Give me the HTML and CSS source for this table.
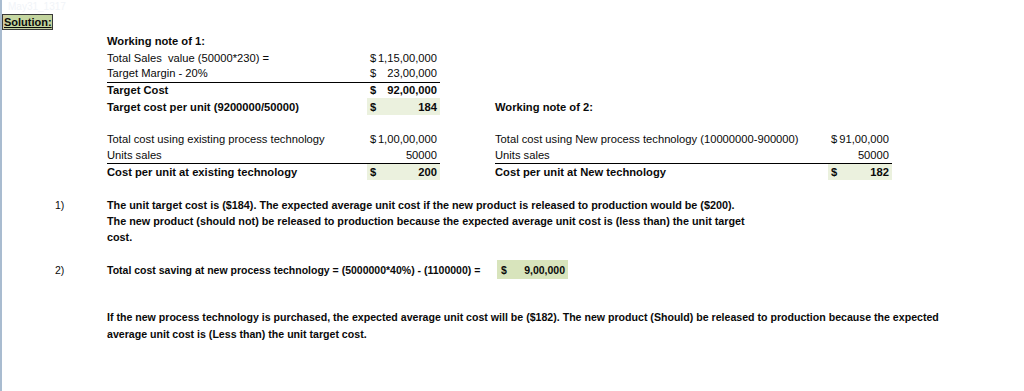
FILE: index.html
```html
<!DOCTYPE html>
<html>
<head>
<meta charset="utf-8">
<link rel="stylesheet" href="styles.css">
</head>
<body>
<div class="sheet">
  <div class="stamp">May31_1317</div>
  <div class="solution">Solution:</div>
  <div class="notes">
    <div class="c1 b">Working note of 1:</div><div></div><div></div><div></div>
    <div class="c1">Total Sales&nbsp; value (50000*230) =</div><div class="val"><span>$</span><span>1,15,00,000</span></div><div></div><div></div>
    <div class="c1 ul">Target Margin - 20%</div><div class="val ul"><span>$</span><span>23,00,000</span></div><div></div><div></div>
    <div class="c1 b">Target Cost</div><div class="val b"><span>$</span><span>92,00,000</span></div><div></div><div></div>
    <div class="c1 b">Target cost per unit (9200000/50000)</div><div class="val b hl"><span>$</span><span>184</span></div><div class="c3 b">Working note of 2:</div><div></div>
    <div class="c1"></div><div></div><div></div><div></div>
    <div class="c1">Total cost using existing process technology</div><div class="val"><span>$</span><span>1,00,00,000</span></div><div class="c3">Total cost using New process technology (10000000-900000)</div><div class="val"><span>$</span><span>91,00,000</span></div>
    <div class="c1 ul">Units sales</div><div class="val ul"><span></span><span>50000</span></div><div class="c3 ul">Units sales</div><div class="val ul"><span></span><span>50000</span></div>
    <div class="c1 b">Cost per unit at existing technology</div><div class="val b hl"><span>$</span><span>200</span></div><div class="c3 b">Cost per unit at New technology</div><div class="val b hl"><span>$</span><span>182</span></div>
  </div>
  <div class="answer a1">
    <div class="num">1)</div>
    <p class="para">The unit target cost is ($184). The expected average unit cost if the new product is released to production would be ($200).<br>The new product (should not) be released to production because the expected average unit cost is (less than) the unit target<br>cost.</p>
  </div>
  <div class="answer a2">
    <div class="num">2)</div>
    <p class="para fixed">Total cost saving at new process technology = (5000000*40%) - (1100000) =</p>
    <div class="saving"><span>$</span><span>9,00,000</span></div>
  </div>
  <p class="final">If the new process technology is purchased, the expected average unit cost will be ($182). The new product (Should) be released to production because the expected<br>average unit cost is (Less than) the unit target cost.</p>
</div>
</body>
</html>
```
FILE: styles.css
```css
html, body {
  margin: 0;
  padding: 0;
  background: #fff;
}
body {
  font-family: "Liberation Sans", Arial, sans-serif;
  font-size: 11.2px;
  color: #0a0a0a;
}
.sheet {
  height: 391px;
  border-left: 2px solid #a9bcd0;
  box-sizing: border-box;
  display: flex;
  flex-direction: column;
}
.stamp {
  height: 14px;
  line-height: 14px;
  padding-left: 6px;
  color: #f1f4f8;
  font-size: 10px;
}
.solution {
  align-self: flex-start;
  width: 51px;
  height: 16px;
  box-sizing: border-box;
  border: 1px solid #3a3a3a;
  background: linear-gradient(90deg, #d2c9a0 0%, #c6d8a2 12%, #c1d39c 100%);
  font-weight: bold;
  text-decoration: underline;
  font-size: 11px;
  line-height: 14px;
  padding-left: 1px;
}
.notes {
  margin-top: 3px;
  margin-left: 105px;
  display: grid;
  grid-template-columns: 260px 73px 388px 64px;
  grid-auto-rows: 16.35px;
  align-items: center;
}
.notes > div {
  height: 100%;
  display: flex;
  align-items: center;
  white-space: nowrap;
}
.c3 { padding-left: 55px; }
.b { font-weight: bold; }
.ul { border-bottom: 1px solid #000; }
.c3.ul { margin-left: 55px; padding-left: 0; }
.val {
  justify-content: space-between;
  padding: 0 3px;
}
.hl { background: #ebf1de; }
.answer {
  display: flex;
  align-items: flex-start;
  font-weight: bold;
  font-size: 10.5px;
}
.a1 { margin-top: 17px; font-size: 10.8px; }
.a2 { margin-top: 15px; align-items: center; }
.num {
  width: 105px;
  flex: none;
  padding-left: 53px;
  box-sizing: border-box;
  line-height: 16px;
  font-weight: normal;
  font-size: 10.5px;
}
.para {
  margin: 0;
  line-height: 16px;
}
.fixed {
  width: 390px;
  flex: none;
  white-space: nowrap;
}
.saving {
  width: 71px;
  height: 19px;
  box-sizing: border-box;
  background: #d8e4bc;
  display: flex;
  align-items: center;
  justify-content: space-between;
  padding: 0 3px 0 4px;
}
.final {
  margin: 30px 0 0 105px;
  font-weight: bold;
  font-size: 10.6px;
  line-height: 17px;
}
```
